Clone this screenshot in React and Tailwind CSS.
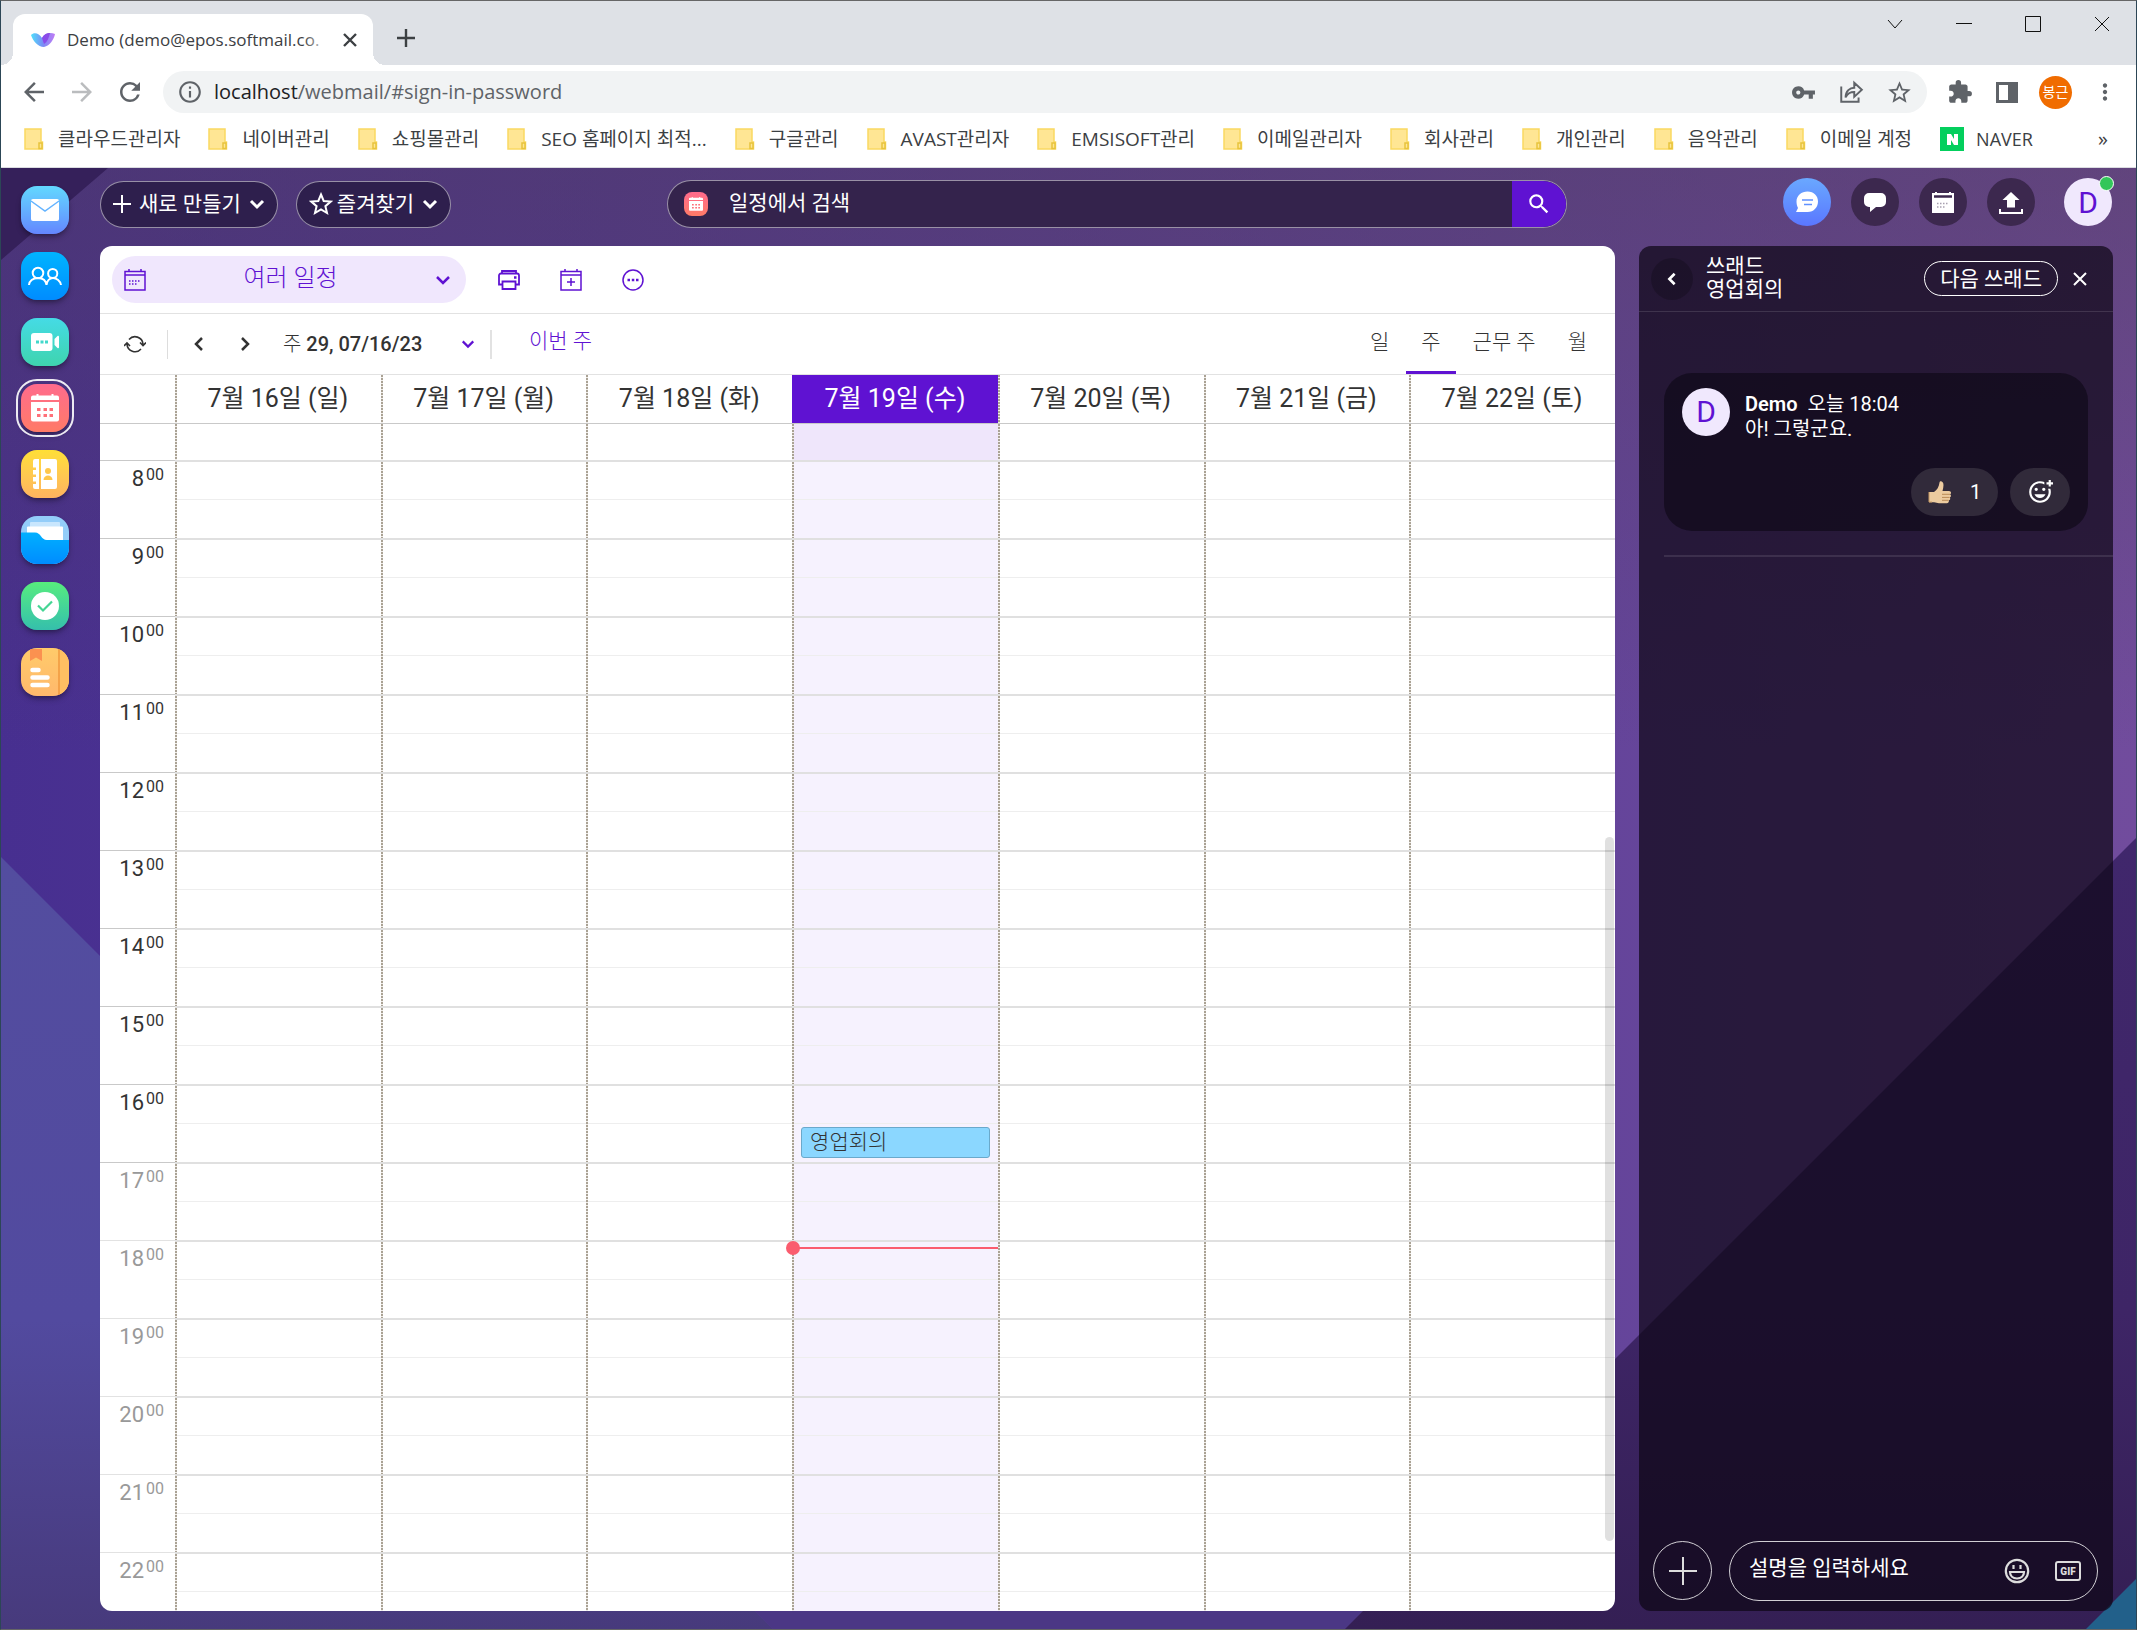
import {
  MdArrowBack,
  MdArrowForward,
  MdExtension,
  MdInfoOutline,
  MdMoreVert,
  MdOutlineAddReaction,
  MdRefresh,
  MdSearch,
  MdStarOutline,
  MdVpnKey,
} from 'react-icons/md'

const BOOKMARKS = [
  '클라우드관리자',
  '네이버관리',
  '쇼핑몰관리',
  'SEO 홈페이지 최적...',
  '구글관리',
  'AVAST관리자',
  'EMSISOFT관리',
  '이메일관리자',
  '회사관리',
  '개인관리',
  '음악관리',
  '이메일 계정',
]

const DAYS = [
  '7월 16일 (일)',
  '7월 17일 (월)',
  '7월 18일 (화)',
  '7월 19일 (수)',
  '7월 20일 (목)',
  '7월 21일 (금)',
  '7월 22일 (토)',
]

const TODAY = 3
const HOURS = [8, 9, 10, 11, 12, 13, 14, 15, 16, 17, 18, 19, 20, 21, 22]
const VIEWS = ['일', '주', '근무 주', '월']

// dotted rule on the left side of every day column
const DAY_RULE =
  'bg-[repeating-linear-gradient(to_bottom,#aaa294_0_2px,#f1eeeb_2px_3px)] bg-[length:2px_100%] bg-no-repeat bg-left'

function Chevron({ dir = 'down', size = 16, width = 3, className = '' }) {
  const paths = {
    down: 'M2 5l6 6 6-6',
    left: 'M11 2L5 8l6 6',
    right: 'M5 2l6 6-6 6',
  }
  return (
    <svg viewBox="0 0 16 16" width={size} height={size} className={className} fill="none" stroke="currentColor" strokeWidth={width}>
      <path d={paths[dir]} />
    </svg>
  )
}

function Folder() {
  return (
    <svg viewBox="0 0 20 22" className="h-[22px] w-5 shrink-0">
      <path d="M1 1h16v13h1.500v7H1z" fill="#ffe694" stroke="#fad961" strokeWidth="1.500" />
      <path d="M15 20.500v-5.500h3v5.500z" fill="#ffe694" stroke="#e8c33c" strokeWidth="1.500" />
    </svg>
  )
}

function BrowserChrome() {
  return (
    <header className="shrink-0 bg-white font-['Open_Sans','Noto_Sans_CJK_KR',sans-serif] text-[#3c4043]">
      <div className="flex h-16 bg-[#dee1e6]">
        <div className="h-3 w-3 self-end bg-[radial-gradient(circle_at_top_left,transparent_12px,white_12px)]" />
        <div className="mt-[13px] flex w-[360px] items-center rounded-t-xl bg-white pr-4 pl-[18px]">
          <svg viewBox="0 0 24 14" className="mr-3 h-[14px] w-6 shrink-0">
            <defs>
              <linearGradient id="fav" x1="0" y1="0" x2="1" y2="0">
                <stop offset="0" stopColor="#4fe0fb" />
                <stop offset="0.500" stopColor="#7a8cf5" />
                <stop offset="1" stopColor="#c07af5" />
              </linearGradient>
            </defs>
            <path d="M0 2C3-1 8 0 11 5c3-5 8-6 13-4-1 5-5 12-11 13C7 14 2 8 0 2z" fill="url(#fav)" />
            <path d="M11 5c2-4 5-5 8-5-1 5-3 9-6 11z" fill="#8a4be8" />
          </svg>
          <span className="relative flex-1 text-[17px] whitespace-nowrap">
            Demo (demo@epos.softmail.co.
            <span className="absolute inset-y-0 right-0 w-7 bg-linear-to-r from-transparent to-white" />
          </span>
          <button aria-label="Close tab" className="ml-3">
            <svg viewBox="0 0 14 14" className="h-[14px] w-[14px]" stroke="#3c4043" strokeWidth="2.400">
              <path d="M1 1l12 12M13 1L1 13" />
            </svg>
          </button>
        </div>
        <div className="h-3 w-3 self-end bg-[radial-gradient(circle_at_top_right,transparent_12px,white_12px)]" />
        <button aria-label="New tab" className="ml-3 mt-3 self-center pb-[3px]">
          <svg viewBox="0 0 18 18" className="h-[18px] w-[18px]" stroke="#3c4043" strokeWidth="2.400">
            <path d="M9 0v18M0 9h18" />
          </svg>
        </button>
        <div className="ml-auto flex h-[45px] items-center gap-[53px] pr-[26px]">
          {['M1 4l7 8 7-8', 'M0 7.500h16', 'M.5 .5h15v15H.5z', 'M1 1l14 14M15 1L1 15'].map((d, i) => (
            <button key={d} aria-label={['Search tabs', 'Minimize', 'Maximize', 'Close'][i]}>
              <svg viewBox="0 0 16 16" className="h-4 w-4" fill="none" stroke="#111" strokeWidth="1">
                <path d={d} />
              </svg>
            </button>
          ))}
        </div>
      </div>

      <div className="flex h-[54px] items-center gap-[18px] pr-[18px] pl-[18px] text-[#5f6368]">
        <button aria-label="Back"><MdArrowBack size={30} /></button>
        <button aria-label="Forward" className="text-[#babcbe]"><MdArrowForward size={30} /></button>
        <button aria-label="Reload"><MdRefresh size={30} /></button>
        <div className="flex h-[42px] flex-1 items-center rounded-full bg-[#f1f3f4] pr-[14px] pl-[14px]">
          <MdInfoOutline size={26} />
          <p className="ml-[11px] flex-1 text-xl">
            <span className="text-[#202124]">localhost</span>/webmail/#sign-in-password
          </p>
          <div className="flex items-center gap-[22px]">
            <MdVpnKey size={25} />
            <svg viewBox="0 0 24 24" className="h-[26px] w-[26px]" fill="none" stroke="currentColor" strokeWidth="1.800">
              <path d="M3 7v14h16v-4M7 17c0-6 4-9 8-9V3.500l7 6.500-7 6.500V12c-4 0-6 1-8 5z" />
            </svg>
            <MdStarOutline size={27} />
          </div>
        </div>
        <div className="ml-[2px] flex items-center gap-5">
          <MdExtension size={26} />
          <svg viewBox="0 0 26 26" className="h-[26px] w-[26px]" fill="currentColor">
            <path d="M3 3h22v21H3zM6 6v15h9V6z" fillRule="evenodd" />
          </svg>
          <span className="flex h-[33px] w-[33px] items-center justify-center rounded-full bg-[#f06c00] text-sm text-white">봉근</span>
          <MdMoreVert size={26} />
        </div>
      </div>

      <div className="flex h-[49px] items-center border-b border-[#dadce0] pr-7 pb-2 pl-[23px] text-[18px]">
        <div className="flex items-center gap-7">
          {BOOKMARKS.map((b) => (
            <a key={b} href="#" className="flex items-center gap-[14px] whitespace-nowrap">
              <Folder />
              <span className="text-[19px]">{b}</span>
            </a>
          ))}
          <a href="#" className="flex items-center gap-3">
            <svg viewBox="0 0 24 24" className="h-6 w-6">
              <path d="M0 0h24v24H0z" fill="#03cf5d" />
              <path d="M7 18V7h4l3 5V7h4v11h-4l-3-5v5z" fill="#fff" />
            </svg>
            NAVER
          </a>
        </div>
        <span className="ml-auto text-xl">»</span>
      </div>
    </header>
  )
}

// Wallpaper: slanted purple facets
function Wallpaper() {
  return (
    <svg viewBox="0 0 2135 1461" preserveAspectRatio="none" className="absolute inset-0 h-full w-full">
      <defs>
        <linearGradient id="wpBase" x1="0" y1="0" x2="1" y2="0">
          <stop offset="0" stopColor="#472f90" />
          <stop offset="0.700" stopColor="#62439a" />
          <stop offset="1" stopColor="#714c9d" />
        </linearGradient>
        <linearGradient id="wpTop" x1="0" y1="0" x2="0" y2="1">
          <stop offset="0" stopColor="#503c5a" stopOpacity="0.480" />
          <stop offset="0.400" stopColor="#503c5a" stopOpacity="0" />
        </linearGradient>
        <linearGradient id="wpLeft" x1="0" y1="0" x2="0" y2="1">
          <stop offset="0" stopColor="#534d9f" />
          <stop offset="0.600" stopColor="#524a9f" />
          <stop offset="1" stopColor="#473a7c" />
        </linearGradient>
        <linearGradient id="wpRight" x1="0" y1="0" x2="0" y2="1">
          <stop offset="0" stopColor="#40276c" />
          <stop offset="0.600" stopColor="#3e2566" />
          <stop offset="1" stopColor="#341f54" />
        </linearGradient>
      </defs>
      <path d="M0 0h2135v1461H0z" fill="url(#wpBase)" />
      <path d="M0 0h2135v1461H0z" fill="url(#wpTop)" />
      <path d="M0 0h107L0 92z" fill="#35205a" />
      <path d="M0 689l772 772H0z" fill="url(#wpLeft)" />
      <path d="M772 1461L600 1289h940l-193 172z" fill="#4b3785" />
      <path d="M2135 670v791h-791z" fill="url(#wpRight)" />
      <path d="M2135 1411v50h-50z" fill="#22608a" />
    </svg>
  )
}

const APPS = [
  {
    name: 'Mail',
    bg: 'bg-linear-to-b from-[#62d8ff] to-[#6486ff]',
    art: (
      <g>
        <rect x="10" y="13" width="28" height="22" rx="2" fill="#fff" />
        <path d="M10 15l14 10 14-10" fill="none" stroke="#65b4ff" strokeWidth="1.500" />
      </g>
    ),
  },
  {
    name: 'Teams',
    bg: 'bg-linear-to-b from-[#00b4ff] to-[#008cff]',
    art: (
      <g fill="none" stroke="#fff" strokeWidth="2">
        <circle cx="17" cy="21" r="5.300" />
        <circle cx="31.700" cy="21.500" r="4.600" />
        <path d="M8 33c0-4 4-7 9-7s8 3 8.500 7c.5-4 3-7 6.500-7s7.500 3 8 7" />
      </g>
    ),
  },
  {
    name: 'Meetings',
    bg: 'bg-linear-to-b from-[#45dbe5] to-[#3fd4ae]',
    art: (
      <g>
        <rect x="10" y="15" width="21.500" height="18" rx="3" fill="#fff" />
        <path d="M33.500 21l3-3c.7-.6 1.500-.3 1.500.7v10.600c0 1-.8 1.300-1.500.7l-3-3z" fill="#fff" />
        <path d="M15 24h3M19.500 24h3M24 24h3" stroke="#42d8cb" strokeWidth="3" />
      </g>
    ),
  },
  {
    name: 'Calendar',
    active: true,
    bg: 'bg-linear-to-b from-[#ff6b8c] to-[#ff7a66]',
    art: (
      <g>
        <path d="M10 16v-2.500a2 2 0 0 1 2-2h3.500V10h2v1.500h13V10h2v1.500H36a2 2 0 0 1 2 2V16z" fill="#fff" />
        <path d="M10 18h28v17.500a2 2 0 0 1-2 2H12a2 2 0 0 1-2-2z" fill="#fff" />
        <path d="M16 25.500h3.500M22.500 25.500H26M28.500 25.500H32M16 31.500h3.500M22.500 31.500H26M28.500 31.500H32" stroke="#ff7079" strokeWidth="3" />
      </g>
    ),
  },
  {
    name: 'Contacts',
    bg: 'bg-linear-to-b from-[#ffdf35] to-[#feb35f]',
    art: (
      <g>
        <path d="M14 9h4v30h-4a2 2 0 0 1-2-2v-3h3v-2.500h-3V27h3v-2.500h-3V20h3v-2.500h-3V11a2 2 0 0 1 2-2z" fill="#fff" />
        <path d="M20 9h14a2 2 0 0 1 2 2v26a2 2 0 0 1-2 2H20z" fill="#fff" />
        <circle cx="27" cy="21" r="3" fill="#fec74b" />
        <path d="M22.500 30c0-6 9-6 9 0z" fill="#fec74b" />
      </g>
    ),
  },
  {
    name: 'Files',
    bg: 'bg-[#93cdf9]',
    art: (
      <g>
        <rect x="9" y="6" width="30" height="6" rx="1" fill="#c8e6fd" />
        <rect x="6" y="10.500" width="36" height="16" rx="1" fill="#fff" />
        <path d="M0 16.500h14c6 0 6 7.500 12 7.500h22v24H0z" fill="url(#folderFront)" />
      </g>
    ),
  },
  {
    name: 'Tasks',
    bg: 'bg-linear-to-b from-[#57ec7c] to-[#35bfab]',
    art: (
      <g>
        <circle cx="24" cy="24" r="14" fill="#fff" />
        <path d="M17 23.500l5 5 9-9" fill="none" stroke="#45d594" strokeWidth="2.200" />
      </g>
    ),
  },
  {
    name: 'Notes',
    bg: 'bg-linear-to-b from-[#ffcb6a] to-[#ffb86c]',
    art: (
      <g>
        <path d="M39 0h9v48h-9z" fill="#ffbf62" />
        <path d="M38 0v48" stroke="#f0993e" strokeWidth="1.500" />
        <path d="M9 1h12v12l-6-3.500L9 13z" fill="#fb9150" />
        <path d="M11.500 22h6M11.500 29.500h15M11.500 37h15" stroke="#fff" strokeWidth="4.500" strokeLinecap="round" />
      </g>
    ),
  },
]

function Sidebar() {
  return (
    <nav className="relative flex w-[99px] shrink-0 flex-col gap-[18px] pt-[18px] pl-5">
      {APPS.map((app) => (
        <a
          key={app.name}
          href="#"
          aria-label={app.name}
          className={`h-12 w-12 rounded-2xl shadow-md shadow-black/30 ${app.bg} ${app.active ? 'outline-2 outline-offset-3 outline-white/90' : ''}`}
        >
          <svg viewBox="0 0 48 48" className="h-12 w-12 rounded-2xl">
            <defs>
              <linearGradient id="folderFront" x1="0" y1="0" x2="0" y2="1">
                <stop offset="0" stopColor="#00b0ff" />
                <stop offset="1" stopColor="#008cff" />
              </linearGradient>
            </defs>
            {app.art}
          </svg>
        </a>
      ))}
    </nav>
  )
}

function TopBar() {
  return (
    <div className="flex h-[78px] shrink-0 items-start justify-between pr-px text-white">
      <div className="mt-[13px] flex gap-[18px] text-[21px] leading-6">
        <button className="flex h-[47px] items-center gap-2 rounded-full border border-white/50 bg-[#2e1f4d] px-3 pb-[2px]">
          <svg viewBox="0 0 18 18" className="h-[18px] w-[18px]" stroke="currentColor" strokeWidth="2">
            <path d="M9 0v18M0 9h18" />
          </svg>
          새로 만들기
          <Chevron />
        </button>
        <button className="flex h-[47px] items-center gap-1 rounded-full border border-white/50 bg-[#2e1f4d] px-3 pb-[2px]">
          <svg viewBox="0 0 24 24" className="h-6 w-6" fill="none" stroke="currentColor" strokeWidth="2">
            <path d="M12 2.500l2.700 6.500 7 .6-5.300 4.600 1.600 6.800-6-3.600-6 3.600 1.600-6.800-5.300-4.600 7-.6z" />
          </svg>
          즐겨찾기
          <Chevron className="ml-1" />
        </button>
      </div>

      <form className="mt-3 flex h-12 w-[900px] overflow-hidden rounded-full border border-white/50 bg-[#34234c]">
        <span className="mt-[11px] ml-4 h-6 w-6 rounded-lg bg-linear-to-b from-[#ff6b8c] to-[#ff7a66]">
          <svg viewBox="0 0 48 48" className="h-6 w-6">{APPS[3].art}</svg>
        </span>
        <input aria-label="일정에서 검색" placeholder="일정에서 검색" className="ml-[21px] flex-1 bg-transparent text-[21px] placeholder-white outline-none" />
        <button type="button" aria-label="Search" className="flex w-[54px] items-center justify-center bg-[#5f12d2]">
          <MdSearch size={26} />
        </button>
      </form>

      <div className="mt-[10px] flex gap-5">
        <button aria-label="Chat" className="flex h-12 w-12 items-center justify-center rounded-full bg-linear-to-b from-[#6aa8ff] to-[#5b76ff]">
          <svg viewBox="0 0 24 24" className="h-6 w-6">
            <path d="M12.500 1.500C19 1.500 23 6 23 11.500S19 22 12.500 22H1l2-4c-1-2-1.500-4-1.500-6.500 0-6 5-10 11-10z" fill="#fff" />
            <path d="M7 10h11M9 14.500h8" stroke="#6091ff" strokeWidth="1.500" />
          </svg>
        </button>
        <button aria-label="Comments" className="flex h-12 w-12 items-center justify-center rounded-full bg-[#3c284e]">
          <svg viewBox="0 0 24 24" className="h-6 w-6">
            <path d="M6 3h12a5 5 0 0 1 5 5v4a5 5 0 0 1-5 5h-5l-6 5v-5H6a5 5 0 0 1-5-5V8a5 5 0 0 1 5-5z" fill="#fff" />
          </svg>
        </button>
        <button aria-label="Agenda" className="flex h-12 w-12 items-center justify-center rounded-full bg-[#3c284e]">
          <svg viewBox="0 0 24 24" className="h-6 w-6">
            <path d="M1 3h3V2h2v1h12V2h2v1h3v20H1z" fill="#fff" />
            <path d="M3 6.500h18" stroke="#3c284e" strokeWidth="2.500" />
            <path d="M6 13.500h12M6 17h9" stroke="#a8a0b0" strokeWidth="1.300" strokeDasharray="1.500 1.500" />
          </svg>
        </button>
        <button aria-label="Upload" className="flex h-12 w-12 items-center justify-center rounded-full bg-[#3c284e]">
          <svg viewBox="0 0 26 26" className="h-[26px] w-[26px]">
            <path d="M13 3l8.500 8H17v7.500H9V11H4.500z" fill="#fff" />
            <path d="M2 20v4h22v-4" fill="none" stroke="#fff" strokeWidth="2" />
          </svg>
        </button>
        <div className="relative ml-[9px] flex h-12 w-12 items-center justify-center rounded-full bg-[#f0e8fd] text-[30px] text-[#5f12d2]">
          D
          <span className="absolute -top-[2px] -right-[2px] h-[15px] w-[15px] rounded-full border border-white bg-[#32c65a]" />
        </div>
      </div>
    </div>
  )
}

function CalendarIcon({ plus }) {
  return (
    <svg viewBox="0 0 22 22" className="h-[22px] w-[22px]" fill="none" stroke="currentColor" strokeWidth="1.500">
      <path d="M1 2.500h20v18.500H1zM1 6h20M5 0v2.500M17 0v2.500" />
      {plus ? <path d="M11 9v8M7 13h8" /> : <path d="M5 12h12M5 15h9" strokeDasharray="1.500 1.500" />}
    </svg>
  )
}

function WeekTable() {
  return (
    <div className="relative min-h-0 flex-1 overflow-hidden">
      <table className="w-full table-fixed border-separate border-spacing-0">
        <thead>
          <tr className="h-[49px] text-[25px]">
            <td className="w-[75px] border-b border-[#c9c9c9]" />
            {DAYS.map((day, i) => (
              <th
                key={day}
                scope="col"
                className={`border-b border-[#c9c9c9] p-0 font-normal leading-8 ${i === TODAY ? 'bg-[#5f12d2] font-medium text-white' : DAY_RULE}`}
              >
                {day}
              </th>
            ))}
          </tr>
        </thead>
        <tbody>
          <tr className="h-9">
            <td />
            {DAYS.map((day, i) => (
              <td key={day} className={`${DAY_RULE} ${i === TODAY ? 'bg-[#efe6fb]' : ''}`} />
            ))}
          </tr>
          {HOURS.map((hour) => (
            <tr key={hour} className="h-[78px]">
              <th
                scope="row"
                className={`border-t p-0 pt-1 pr-[11px] text-right align-top text-[22px] leading-7 font-normal ${
                  hour > 16 ? 'text-[#999]' : 'text-[#333]'
                } ${hour > 17 ? 'border-[#e2e2e2]' : 'border-[#c9c9c9]'}`}
              >
                {hour}
                <sup className="-top-[6px] ml-[2px] text-base leading-none">00</sup>
              </th>
              {DAYS.map((day, i) => (
                <td
                  key={day}
                  className={`relative border-t-2 border-[#e0e0e0] p-0 align-top ${DAY_RULE} ${i === TODAY ? 'bg-[#f6f2fe]' : ''}`}
                >
                  <div className="ml-[2px] h-[38px] border-b border-[#eeeeee]" />
                  {i === TODAY && hour === 16 && (
                    <a
                      href="#"
                      className="absolute top-[41px] right-2 left-[9px] h-[31px] rounded-[3px] border border-[#6aa9cb] bg-[#8bd7ff] px-2 text-[21px] leading-7 font-light"
                    >
                      영업회의
                    </a>
                  )}
                  {i === TODAY && hour === 18 && (
                    <div className="absolute top-[5px] right-0 left-0 h-[2px] bg-[#fa5c6e]">
                      <span className="absolute -top-[6px] -left-[6px] h-[14px] w-[14px] rounded-full bg-[#fa5c6e]" />
                    </div>
                  )}
                </td>
              ))}
            </tr>
          ))}
        </tbody>
      </table>
      <div className="absolute top-[462px] right-px bottom-[70px] w-[9px] rounded-full bg-black/12" />
    </div>
  )
}

function CalendarCard() {
  return (
    <main className="flex min-w-0 flex-1 flex-col overflow-hidden rounded-xl bg-white text-[#333]">
      <div className="flex h-[68px] shrink-0 items-center border-b border-[#e2e2e2] pl-3 text-[#5f12d2]">
        <button className="flex h-[47px] w-[354px] items-center justify-between rounded-full bg-[#f0e7fd] pr-[15px] pl-3 text-2xl font-light">
          <CalendarIcon />
          <span className="pb-1">여러 일정</span>
          <Chevron width={2.5} />
        </button>
        <div className="ml-8 flex items-center gap-10">
          <button aria-label="Print">
            <svg viewBox="0 0 22 22" className="h-[22px] w-[22px]" fill="none" stroke="currentColor" strokeWidth="1.800">
              <path d="M4.500 15.500H1V6.500a2 2 0 0 1 2-2h16a2 2 0 0 1 2 2v9h-3.500M4 4.500V2h14v2.500M4.500 12.500h13V20h-13z" />
              <path d="M16 8.500h2.500" strokeWidth="2.500" />
            </svg>
          </button>
          <button aria-label="Add event"><CalendarIcon plus /></button>
          <button aria-label="More">
            <svg viewBox="0 0 22 22" className="h-[22px] w-[22px]" fill="none" stroke="currentColor" strokeWidth="1.500">
              <circle cx="11" cy="11" r="10" />
              <path d="M5.500 11H8M9.800 11h2.500M14 11h2.500" strokeWidth="2.500" />
            </svg>
          </button>
        </div>
      </div>

      <div className="flex h-[61px] shrink-0 items-center border-b border-[#e2e2e2] pr-[13px] pl-6 text-xl">
        <button aria-label="Refresh">
          <svg viewBox="0 0 22 22" className="h-[22px] w-[22px]" fill="none" stroke="currentColor" strokeWidth="1.600">
            <path d="M5 6.500A8 8 0 0 1 19 11v1M16 9.500l3 3 3-3M17 16a8 8 0 0 1-14-5v-1M0 13l3-3 3 3" />
          </svg>
        </button>
        <span className="mr-2 ml-[21px] h-[29px] w-px bg-[#ddd]" />
        <button aria-label="Previous week" className="flex w-[46px] justify-center"><Chevron dir="left" width={2.5} /></button>
        <button aria-label="Next week" className="flex w-[46px] justify-center"><Chevron dir="right" width={2.5} /></button>
        <button className="flex h-[29px] w-[224px] items-center justify-between border-r-2 border-[#e2e2e2] px-[15px] font-light">
          <span>주 <span className="font-medium">29, 07/16/23</span></span>
          <Chevron size={14} width={2.5} className="text-[#5f12d2]" />
        </button>
        <button className="ml-[37px] pb-1 text-[21px] font-light text-[#5f12d2]">이번 주</button>
        <div className="ml-auto flex h-full gap-[2px] text-[21px] font-light">
          {VIEWS.map((v, i) => (
            <button
              key={v}
              className={`border-b-3 px-[15px] text-[#333] ${i === 1 ? 'border-[#5f12d2]' : 'border-transparent'}`}
            >
              {v}
            </button>
          ))}
        </div>
      </div>

      <WeekTable />
    </main>
  )
}

function ThumbsUp() {
  return (
    <svg viewBox="0 0 24 24" className="h-6 w-6">
      <path d="M1 12h5c3-2 5-5 5.500-9.500C11.800.5 15.500 1 15.500 5c0 2-.5 4-1 6h6.500c2.500 0 2.500 3 1 3.300 1.500.8 1.200 2.900-.3 3.100 1 1 .5 2.700-.9 2.900.5 1.500-.5 2.900-2 2.900H11c-2 0-3-1-5-1H1z" fill="#eccb9f" />
      <path d="M14 14.300h8M14 17.400h7.500M14 20.300h6.500" stroke="#b98a55" strokeWidth="1" />
      <path d="M1 12v10h3" stroke="#c79a64" strokeWidth="1" fill="none" />
    </svg>
  )
}

function ThreadPanel() {
  return (
    <aside className="flex w-[474px] shrink-0 flex-col rounded-xl bg-[#0d0614]/70 text-xl text-white">
      <div className="flex h-[66px] items-center border-b border-white/12 pr-[26px] pl-3 text-[21px]">
        <button aria-label="Back" className="flex h-[42px] w-[42px] items-center justify-center rounded-full bg-black/20">
          <Chevron dir="left" size={14} />
        </button>
        <h2 className="ml-[13px] flex-1 pb-[2px] leading-[23px]">쓰래드<br />영업회의</h2>
        <button className="h-[35px] rounded-full border border-white px-[15px] leading-8">다음 쓰래드</button>
        <button aria-label="Close" className="ml-[15px]">
          <svg viewBox="0 0 14 14" className="h-[14px] w-[14px]" stroke="currentColor" strokeWidth="2">
            <path d="M1 1l12 12M13 1L1 13" />
          </svg>
        </button>
      </div>

      <article className="mx-[25px] mt-[61px] flex h-[158px] flex-col justify-between rounded-[28px] bg-[#0c0614]/60 px-[18px] py-[15px]">
        <div className="flex gap-[15px]">
          <span className="flex h-12 w-12 items-center justify-center rounded-full bg-[#f0e8fd] text-[30px] text-[#5f12d2]">D</span>
          <div className="pt-1 leading-[25px]">
            <p><b className="mr-[10px] font-semibold">Demo</b>오늘 18:04</p>
            <p>아! 그렇군요.</p>
          </div>
        </div>
        <div className="flex justify-end gap-3">
          <button className="flex h-12 w-[87px] items-center justify-center gap-[18px] rounded-full bg-[#312a3a]">
            <ThumbsUp /> 1
          </button>
          <button aria-label="Add reaction" className="flex h-12 w-[60px] items-center justify-center rounded-full bg-[#312a3a]">
            <MdOutlineAddReaction size={26} />
          </button>
        </div>
      </article>
      <hr className="mt-6 ml-[25px] border-t-2 border-white/10" />

      <div className="mt-auto flex gap-[17px] pr-[15px] pb-[10px] pl-[14px] text-[21px]">
        <button aria-label="Add" className="flex h-[59px] w-[59px] shrink-0 items-center justify-center rounded-full border border-white/80">
          <svg viewBox="0 0 28 28" className="h-7 w-7" stroke="#ddd" strokeWidth="2">
            <path d="M14 0v28M0 14h28" />
          </svg>
        </button>
        <div className="flex h-[60px] min-w-0 flex-1 items-center rounded-full border border-white/80 pr-4 pl-[19px]">
          <input aria-label="설명을 입력하세요" placeholder="설명을 입력하세요" className="min-w-0 flex-1 bg-transparent pb-1 placeholder-white outline-none" />
          <svg viewBox="0 0 26 26" className="h-[26px] w-[26px] shrink-0" fill="none" stroke="#ddd" strokeWidth="2.200">
            <circle cx="13" cy="13" r="11.200" />
            <path d="M6 14h14c0 4-3 6.500-7 6.500S6 18 6 14zM9.500 7v4M16.500 7v4" />
          </svg>
          <svg viewBox="0 0 26 20" className="ml-[25px] h-5 w-[26px] shrink-0">
            <rect x="1" y="1" width="24" height="18" rx="2" fill="none" stroke="#ddd" strokeWidth="2" />
            <text x="13" y="14" textAnchor="middle" fill="#ddd" fontSize="10" fontWeight="900">GIF</text>
          </svg>
        </div>
      </div>
    </aside>
  )
}

export default function App() {
  return (
    <div className="flex h-screen flex-col overflow-hidden border border-t-[#666] border-r-[#2c4656] border-b-[#666] border-l-[#2c4656] font-[Roboto,'Noto_Sans_CJK_KR',sans-serif]">
      <BrowserChrome />
      <div className="relative flex min-h-0 flex-1">
        <Wallpaper />
        <Sidebar />
        <div className="relative flex min-w-0 flex-1 flex-col pr-[23px] pb-[18px]">
          <TopBar />
          <div className="flex min-h-0 flex-1 gap-6">
            <CalendarCard />
            <ThreadPanel />
          </div>
        </div>
      </div>
    </div>
  )
}
